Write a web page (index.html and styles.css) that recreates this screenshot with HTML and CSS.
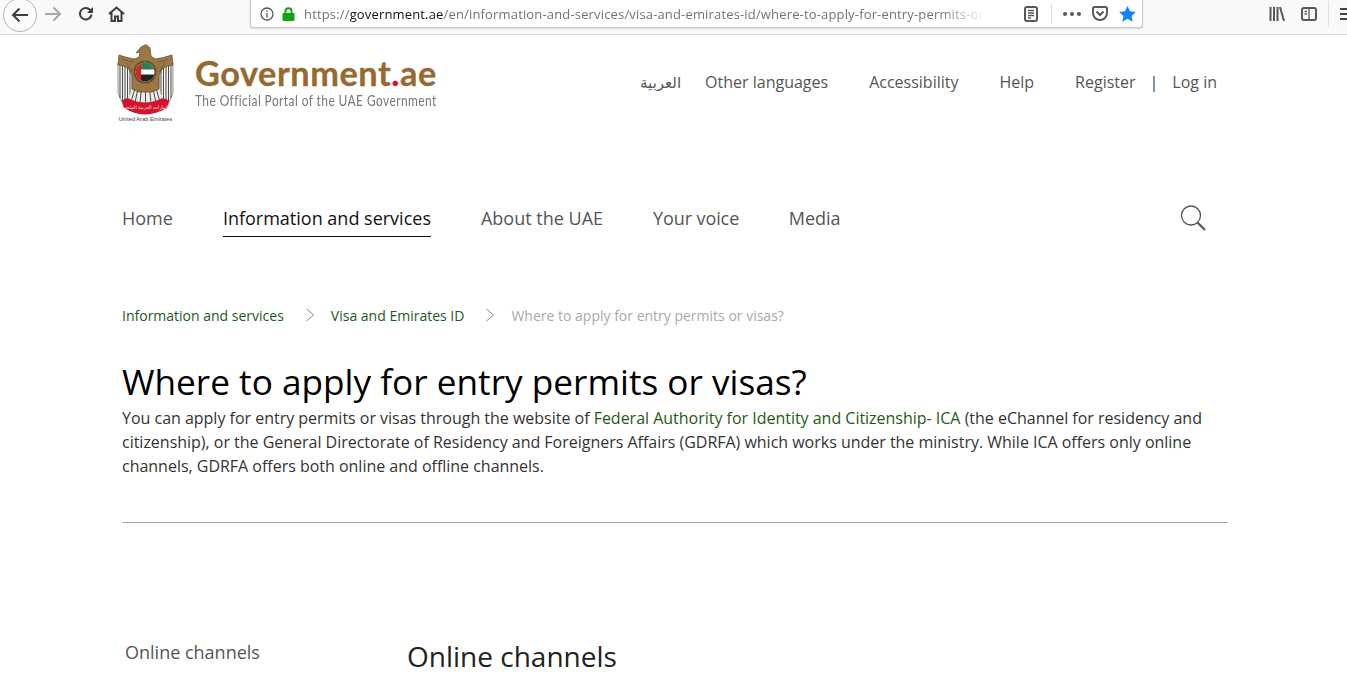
FILE: index.html
```html
<!DOCTYPE html>
<html lang="en">
<head>
<meta charset="utf-8">
<title>Where to apply for entry permits or visas?</title>
<link rel="stylesheet" href="styles.css">
</head>
<body>
<div class="toolbar">
  <div class="nav-btns">
    <span class="back"><svg width="18" height="16" viewBox="0 0 18 16"><path d="M17 8H2M8.500 1.500 2 8l6.500 6.500" class="ic-dark" /></svg></span>
    <svg class="fwd" width="18" height="16" viewBox="0 0 18 16"><path d="M1 8h15M9.500 1.500 16 8l-6.500 6.500" class="ic-grey"/></svg>
    <svg class="reload" width="16" height="16" viewBox="0 0 16 16"><path d="M13.500 8.500A5.800 5.800 0 1 1 12 3.800L14 6" class="ic-dark"/><path d="M15 1v6H9z" class="ic-fill"/></svg>
    <svg class="home" width="17" height="16" viewBox="0 0 17 16"><path d="M1 8 8.500 1.500 16 8M3.500 6.500V15h3.500v-4.500h3V15h3.500V6.500" class="ic-dark"/></svg>
  </div>
  <div class="urlbar">
    <svg class="info" width="14" height="14" viewBox="0 0 14 14"><circle cx="7" cy="7" r="6" class="ic-thin"/><path d="M7 6v4.500M7 3.500v1.400" class="ic-thin"/></svg>
    <svg class="lock" width="13" height="14" viewBox="0 0 13 14"><path d="M3.500 6V4.200a3 3 0 0 1 6 0V6" class="ic-lock"/><rect x="0.500" y="6" width="12" height="8" rx="1" class="ic-lockfill"/></svg>
    <span class="url"><span class="u-scheme">https://</span><span class="u-host">government.ae</span><span class="u-path">/en/information-and-services/visa-and-emirates-id/where-to-apply-for-entry-permits-or-</span></span>
    <svg class="reader" width="14" height="16" viewBox="0 0 14 16"><rect x="1" y="1" width="12" height="14" rx="2" class="ic-mid"/><path d="M4 4.500h6M4 7h6M4 9.500h6M4 12h3" class="ic-thin"/></svg>
    <span class="sep"></span>
    <span class="dots"><i></i><i></i><i></i></span>
    <svg class="pocket" width="16" height="15" viewBox="0 0 16 15"><path d="M1 2.500Q1 1 2.500 1h11Q15 1 15 2.500V7A7 7 0 0 1 1 7z" class="ic-mid"/><path d="M4.500 5.500 8 9l3.500-3.500" class="ic-mid"/></svg>
    <svg class="star" width="17" height="16" viewBox="0 0 17 16"><path d="M8.500 0 11 5.300l5.800.7-4.300 4 1.200 5.800-5.200-3-5.200 3L4.500 10 .2 6 6 5.300z" fill="#0a84ff"/></svg>
  </div>
  <div class="tools">
    <svg class="library" width="16" height="14" viewBox="0 0 16 14"><path d="M1.500 0v14M5 0v14M8.500 0v14M11 0l4 14" class="ic-mid"/></svg>
    <svg class="sidebar" width="16" height="14" viewBox="0 0 16 14"><rect x="1" y="1" width="14" height="12" rx="2" class="ic-mid"/><path d="M8 1v12M3.500 4.500H6M3.500 7H6" class="ic-thin"/></svg>
    <span class="tool-sep"></span>
    <span class="burger"><i></i><i></i><i></i></span>
  </div>
</div>

<div class="page">
  <header class="masthead">
    <div class="brand">
      <div class="emblem">
        <svg width="57" height="72" viewBox="0 0 57 72">
          <path d="M1 20 15 24V50L7 64 1 50z" class="panel"/>
          <path d="M56 20 42 24V50L50 64 56 50z" class="panel"/>
          <path d="M3 22V55M5.500 22V59M8 23V60M10.500 23V56M13 24V52M54 22V55M51.500 22V59M49 23V60M46.500 23V56M44 24V52" class="stripes"/>
          <path d="M15 44H42L46 60H11z" class="tail"/>
          <path d="M18 45 14 59M21 45 18 60M24.500 45 23 60M28.500 45V60M32.500 45 34 60M36 45 39 60M39 45 43 59" class="stripes"/>
          <path d="M19 10 24 4 29 1.500 33 5 34 13 38 16Q46 15 55 12L56 22Q50 22 45 26L42 32V46L35 49H22L15 46V32L12 26Q6 22 1 22L2 12Q10 15 18 16L22 14 23 9z" class="wings"/>
          <path d="M6 16Q12 19 17 19M51 16Q45 19 40 19M9 20 15 29M48 20 42 29" class="wing-lines"/>
          <circle cx="28" cy="29" r="11.500" fill="#6b4f2a"/>
          <circle cx="28" cy="29" r="9.500" fill="#fff"/>
          <path d="M24 20.400A9.500 9.500 0 0 1 37.200 26.500H24z" fill="#2f7d58"/>
          <path d="M24 31.500H37.200A9.500 9.500 0 0 1 24 37.600z" fill="#222"/>
          <path d="M24 20.400V37.600A9.500 9.500 0 0 1 24 20.400z" fill="#d8232a"/>
          <path d="M5 58Q9 53 15 57 28 62 41 57 47 53 52 58L50 65Q39 71 28 71.500 17 71 7 65z" fill="#d3122d"/>
          <text x="28.500" y="66" class="ribbon" lang="ar">الإمارات العربية المتحدة</text>
        </svg>
        <span class="emblem-name">United Arab Emirates</span>
      </div>
      <div class="wordmark">
        <div class="wm-title">Government<span class="wm-dot">.</span>ae</div>
        <div class="wm-sub">The Official Portal of the UAE Government</div>
      </div>
    </div>
    <nav class="util">
      <a class="ar" lang="ar">العربية</a>
      <a class="u-lang">Other languages</a>
      <a class="u-acc">Accessibility</a>
      <a class="u-help">Help</a>
      <a>Register</a>
      <span class="pipe">|</span>
      <a>Log in</a>
    </nav>
  </header>

  <nav class="mainnav">
    <a>Home</a>
    <a class="active">Information and services</a>
    <a>About the UAE</a>
    <a class="nv-voice">Your voice</a>
    <a>Media</a>
    <svg class="search" width="28" height="28" viewBox="0 0 28 28"><circle cx="12" cy="11.500" r="9.500" fill="none" stroke="#555" stroke-width="1.300"/><path d="M18.500 18.500 26 26" stroke="#555" stroke-width="2.200"/></svg>
  </nav>

  <div class="crumbs">
    <a>Information and services</a>
    <svg class="chev" width="10" height="14" viewBox="0 0 10 14"><path d="M1.500 1 8.500 7l-7 6" fill="none" stroke="#888" stroke-width="1"/></svg>
    <a>Visa and Emirates ID</a>
    <svg class="chev" width="10" height="14" viewBox="0 0 10 14"><path d="M1.500 1 8.500 7l-7 6" fill="none" stroke="#888" stroke-width="1"/></svg>
    <span class="current">Where to apply for entry permits or visas?</span>
  </div>

  <h1 class="title">Where to apply for entry permits or visas?</h1>
  <p class="intro">You can apply for entry permits or visas through the website of <a>Federal Authority for Identity and Citizenship- ICA</a> (the eChannel for residency and citizenship), or the General Directorate of Residency and Foreigners Affairs (GDRFA) which works under the ministry. While ICA offers only online channels, GDRFA offers both online and offline channels.</p>
  <hr class="rule">

  <div class="columns">
    <aside class="side">Online channels</aside>
    <h2 class="section-title">Online channels</h2>
  </div>
</div>
</body>
</html>
```

FILE: styles.css
```css
* { box-sizing: border-box; }
html, body { margin: 0; height: 684px; overflow: hidden; background: #fff; }
body { font-family: "Open Sans", "Noto Sans", sans-serif; color: #333; }
a { color: inherit; text-decoration: none; }

.ic-dark { fill: none; stroke: #3d3d3f; stroke-width: 2; }
.ic-grey { fill: none; stroke: #a8a8aa; stroke-width: 2; }
.ic-fill { fill: #3d3d3f; }
.ic-mid { fill: none; stroke: #58585b; stroke-width: 2; }
.ic-thin { fill: none; stroke: #58585b; stroke-width: 1.300; }
.ic-lock { fill: none; stroke: #12a312; stroke-width: 2; }
.ic-lockfill { fill: #12a312; }

.toolbar { height: 35px; background: #f9f9fa; border-bottom: 1px solid #d8d8da; display: flex; align-items: flex-start; }
.nav-btns { width: 250px; height: 34px; display: flex; align-items: center; padding-left: 3px; flex: none; }
.back { width: 34px; height: 34px; margin-top: -4px; border: 1px solid #b3b3b5; border-radius: 50%; background: #fbfbfb; display: flex; align-items: center; justify-content: center; flex: none; }
.back svg { margin-top: 0; }
.fwd { margin: -6px 0 0 7px; }
.reload { margin: -7px 0 0 16px; }
.home { margin: -6px 0 0 14px; }

.urlbar { width: 893px; height: 28px; margin-top: 0; background: #fff; border: 1px solid #c8c8ca; border-top: 0; border-radius: 0 0 3px 3px; box-shadow: 0 1px 2px rgba(0,0,0,.12); display: flex; align-items: center; padding: 0 6px 0 9px; flex: none; }
.info { flex: none; }
.lock { flex: none; margin-left: 8px; }
.url { font-size: 13px; line-height: 20px; margin-left: 9px; width: 690px; white-space: nowrap; overflow: hidden; flex: none; letter-spacing: .16px; -webkit-mask-image: linear-gradient(to right, #000 92%, transparent 99%); mask-image: linear-gradient(to right, #000 92%, transparent 99%); }
.u-scheme, .u-path { color: #737373; }
.u-host { color: #111; }
.reader { margin-left: 30px; flex: none; }
.sep { width: 1px; height: 20px; background: #dcdcde; margin-left: 13px; flex: none; }
.dots { display: flex; gap: 3px; margin-left: 11px; flex: none; }
.dots i { width: 4px; height: 4px; border-radius: 50%; background: #555; }
.pocket { margin-left: 11px; flex: none; }
.star { margin-left: 11px; flex: none; }

.tools { flex: 1; height: 34px; display: flex; align-items: center; padding: 0 0 6px 126px; overflow: hidden; }
.tools svg { flex: none; }
.sidebar { margin-left: 16px; }
.tool-sep { width: 1px; height: 26px; background: #e0e0e2; margin-left: 11px; flex: none; }
.burger { margin-left: 11px; width: 8px; display: flex; flex-direction: column; gap: 3px; flex: none; }
.burger i { height: 2px; background: #444; }

.page { padding: 0 119px 0 122px; }

.masthead { height: 102px; display: flex; align-items: flex-start; justify-content: space-between; }
.brand { display: flex; margin-left: -5px; padding-top: 8px; }
.emblem { width: 57px; display: flex; flex-direction: column; align-items: center; }
.emblem svg { display: block; }
.panel { fill: #f4f2ee; stroke: #555; stroke-width: .6; }
.stripes { fill: none; stroke: #4a4a4a; stroke-width: 1; }
.tail { fill: #ecebe8; }
.wings { fill: #9b7744; stroke: #5c4426; stroke-width: .7; }
.wing-lines { fill: none; stroke: #6b4f2a; stroke-width: .7; }
.ribbon { font-family: "Noto Sans", "DejaVu Sans", sans-serif; font-size: 5px; fill: #fbe3e5; text-anchor: middle; }
.emblem-name { font-family: "Liberation Sans", sans-serif; font-size: 5.700px; line-height: 9px; margin-top: 0; color: #444; white-space: nowrap; }
.wordmark { margin-left: 21px; padding-top: 11px; }
.wm-title { font-family: "Lato", sans-serif; font-weight: 700; font-size: 34.300px; line-height: 38px; letter-spacing: .55px; color: #946a30; white-space: nowrap; -webkit-text-stroke: .3px #946a30; }
.wm-dot { color: #d3122d; -webkit-text-stroke: .3px #d3122d; }
.wm-sub { font-family: "Lato", sans-serif; font-size: 14.500px; line-height: 18px; letter-spacing: .52px; margin-top: 0; color: #77777a; white-space: nowrap; transform: scaleX(.823); transform-origin: left; width: 270px; }

.util { display: flex; align-items: center; padding-top: 34px; font-size: 16px; line-height: 26px; color: #555; margin-right: 11px; }
.ar { font-size: 15px; font-family: "Noto Sans", "DejaVu Sans", sans-serif; margin-left: -1px; }
.u-lang { margin-left: 24px; }
.u-acc { margin-left: 41px; }
.u-help { margin-left: 41px; margin-right: 41px; }
.pipe { margin: 0 14px; color: #0f3f80; }

.mainnav { height: 48px; margin-top: 58px; display: flex; align-items: flex-start; font-size: 18px; line-height: 26px; color: #555; gap: 50px; padding-top: 7px; }
.mainnav a { padding: 3px 0 5px; white-space: nowrap; }
.mainnav .active { color: #111; border-bottom: 1px solid #111; }
.mainnav .nv-voice { letter-spacing: -.1px; margin-right: -.4px; }
.search { margin-left: auto; margin-right: 21px; margin-top: 2px; }

.crumbs { display: flex; align-items: center; margin-top: 63px; font-size: 14px; line-height: 20px; color: #1a5a1a; }
.chev { margin: -2px 16px 0 21px; }
.current { color: #a9a9a9; }

.title { margin: 32px 0 1px; font-size: 35.200px; line-height: 47px; font-weight: 400; color: #000; white-space: nowrap; }
.intro { margin: 0; font-size: 16px; line-height: 24px; letter-spacing: -.015px; color: #333; width: 1106px; }
.intro a { color: #1e5a12; }
.rule { margin: 44px 0 0; border: 0; border-top: 1px solid #a9a9a9; width: 1106px; }

.columns { display: grid; grid-template-columns: 285px 1fr; margin-top: 116px; }
.side { font-size: 18px; line-height: 26px; color: #555; padding-left: 3px; }
.section-title { margin: -1px 0 0; font-size: 28px; line-height: 36px; font-weight: 400; color: #222; }
```
